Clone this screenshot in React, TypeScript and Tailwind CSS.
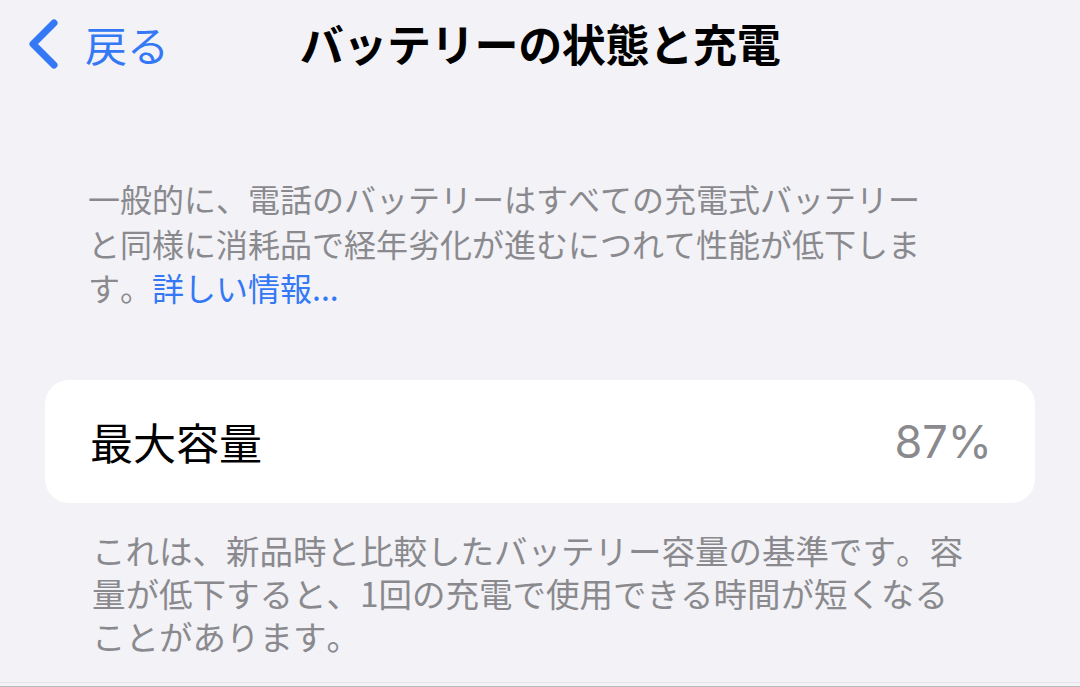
export default function App() {
  const cjk = {
    fontFamily: '"Noto Sans CJK JP", "Noto Sans", sans-serif',
  };

  return (
    <div
      className="relative w-[1080px] h-[687px] overflow-hidden bg-[#f2f2f7] flex flex-col [text-spacing-trim:space-all] [font-kerning:none] [font-feature-settings:'chws'_0,'halt'_0,'palt'_0]"
      style={cjk}
    >
      {/* Navigation bar */}
      <div className="h-[90px] grid grid-cols-[1fr_auto_1fr] items-center">
        <div className="flex items-center pl-[27px] gap-[26px] text-[#3478f6]">
          <svg width="32" height="52" viewBox="0 0 32 52" fill="none" className="mt-[-2px]">
            <path
              d="M27 5 L6 26 L27 47"
              stroke="currentColor"
              strokeWidth="7"
              strokeLinecap="round"
              strokeLinejoin="round"
            />
          </svg>
          <span className="text-[42px] leading-none mt-[-2px]">戻る</span>
        </div>
        <h1 className="text-[44px] font-bold leading-none text-black tracking-[-0.3px] mt-[-4px]">
          バッテリーの状態と充電
        </h1>
        <div />
      </div>

      {/* Intro text */}
      <p className="mt-[86px] ml-[88px] w-[845px] text-[32px] leading-[44.5px] text-[#8a8a8e]">
        一般的に、電話のバッテリーはすべての充電式バッテリーと同様に消耗品で経年劣化が進むにつれて性能が低下します。
        <span className="text-[#3478f6]">詳しい情報...</span>
      </p>

      {/* Maximum capacity card */}
      <div className="mt-[70px] ml-[45px] w-[990px] h-[123px] shrink-0 rounded-[24px] bg-white flex items-center justify-between pl-[45px] pr-[43px]">
        <span className="text-[43px] leading-none text-black">最大容量</span>
        <span
          className="text-[45px] leading-none text-[#8a8a8e]"
          style={{ fontFamily: 'Inter, "Noto Sans", sans-serif' }}
        >
          87%
        </span>
      </div>

      {/* Footer note */}
      <p className="mt-[25px] ml-[92px] w-[880px] text-[33.5px] leading-[43px] text-[#8a8a8e]">
        これは、新品時と比較したバッテリー容量の基準です。容量が低下すると、1回の充電で使用できる時間が短くなることがあります。
      </p>

      <div className="flex-1" />
      <div className="h-px bg-[#e4e4ea]" />
      <div className="h-[3px]" />
      <div className="h-px bg-[#b8b8bd]" />
    </div>
  );
}
